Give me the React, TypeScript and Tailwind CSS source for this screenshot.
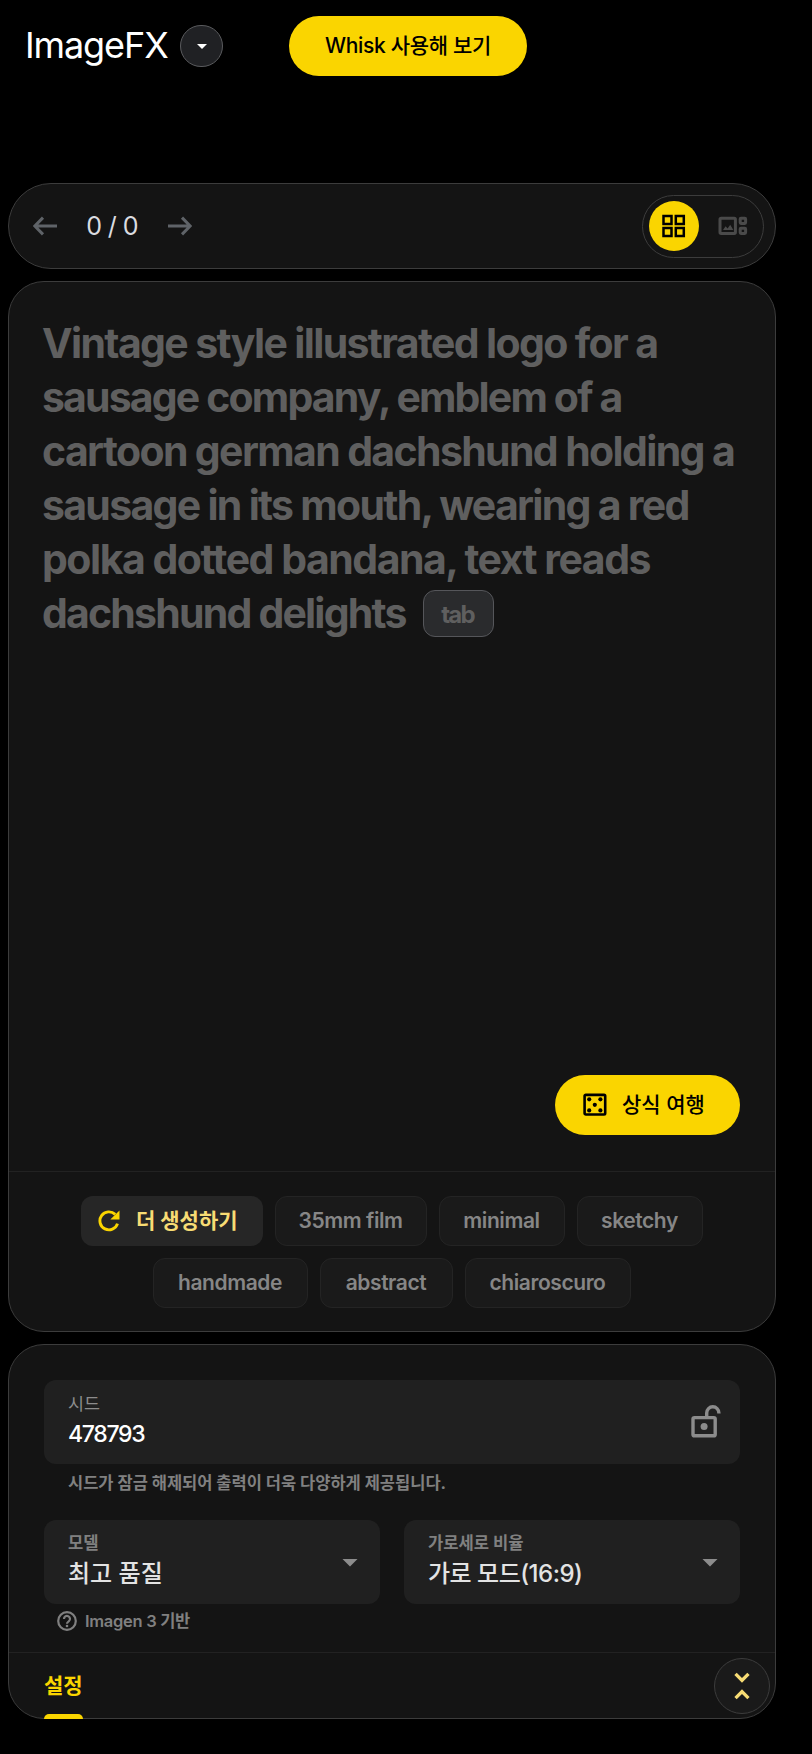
import { MdArrowDropDown, MdUnfoldLess } from "react-icons/md";

const promptLines = [
  { text: "Vintage style illustrated logo for a", className: "tracking-[-1.64px]" },
  { text: "sausage company, emblem of a", className: "tracking-[-1.85px]" },
  { text: "cartoon german dachshund holding a", className: "tracking-[-1.64px]" },
  { text: "sausage in its mouth, wearing a red", className: "tracking-[-1.71px]" },
  { text: "polka dotted bandana, text reads", className: "tracking-[-1.49px]" },
];

const chips = [
  { label: "35mm film", className: "w-[152px]" },
  { label: "minimal", className: "w-[126px]" },
  { label: "sketchy", className: "w-[126px]" },
  { label: "handmade", className: "w-[155px]" },
  { label: "abstract", className: "w-[133px]" },
  { label: "chiaroscuro", className: "w-[166px]" },
];

const ArrowIcon = ({ className = "" }: { className?: string }) => (
  <svg className={className} width="24" height="20" viewBox="0 0 24 20" fill="none" stroke="#5f6368" strokeWidth="3">
    <path d="M24 10H2.4M10 1.6L1.8 10l8.2 8.4" />
  </svg>
);

const GridIcon = () => (
  <svg width="24" height="24" viewBox="0 0 24 24" fill="none" stroke="#000" strokeWidth="2.5">
    <path d="M1.5 2h8v8h-8zM13.8 2h8v8h-8zM1.5 14h8v8h-8zM13.8 14h8v8h-8z" />
  </svg>
);

const GalleryIcon = () => (
  <svg width="30" height="20" viewBox="0 0 30 20" fill="none" stroke="#4a4a4a" strokeWidth="3">
    <rect x="2" y="2.2" width="15.4" height="15.2" rx="1.2" />
    <rect x="22.2" y="2.2" width="5.4" height="5.2" rx="0.8" />
    <rect x="22.2" y="12.2" width="5.4" height="5.2" rx="0.8" />
    <path d="M5 14l2.6-3.8 2 2.4 2.6-3.8 3.2 5.2z" fill="#4a4a4a" stroke="none" />
  </svg>
);

const DiceIcon = () => (
  <svg width="24" height="24" viewBox="0 0 24 24">
    <rect x="1.6" y="1.9" width="20.6" height="19.6" rx="1.2" fill="none" stroke="#000" strokeWidth="2.6" />
    <circle cx="6.2" cy="6.3" r="2.1" />
    <circle cx="17.4" cy="6.3" r="2.1" />
    <circle cx="11.8" cy="11.8" r="2.1" />
    <circle cx="6.2" cy="17.4" r="2.1" />
    <circle cx="17.4" cy="17.4" r="2.1" />
  </svg>
);

const RefreshIcon = () => (
  <svg width="22" height="22" viewBox="0 0 22 22">
    <path d="M17.2 4.4A9 9 0 1 0 19.5 13.6" fill="none" stroke="#fad500" strokeWidth="2.9" />
    <path d="M21.5 0.4V9.6H12.3z" fill="#fad500" />
  </svg>
);

const HelpIcon = () => (
  <svg width="24" height="24" viewBox="0 0 24 24" fill="none" stroke="#808080" strokeWidth="2.2">
    <circle cx="12" cy="12" r="8.8" />
    <path d="M9 10a3 3 0 1 1 4.9 2.2c-1 .8-1.9 1.3-1.9 2.6" />
    <circle cx="12" cy="17" r="1.3" fill="#808080" stroke="none" />
  </svg>
);

const UnlockIcon = () => (
  <svg width="30" height="33" viewBox="0 0 30 33" fill="none" stroke="#8c8c8c" strokeWidth="3.4">
    <rect x="2" y="12.6" width="22.2" height="18.2" rx="1.4" />
    <path d="M15.7 12V7.9a6.1 6.1 0 0 1 12.2 0v.6" />
    <circle cx="13.1" cy="21.6" r="3.5" fill="#8c8c8c" stroke="none" />
  </svg>
);

const SelectField = ({ label, value, valueClass = "" }: { label: string; value: string; valueClass?: string }) => (
  <div className="flex h-[84px] w-[336px] items-center justify-between rounded-xl bg-[#202020] pl-6 pr-3">
    <div className="flex h-full flex-col pt-[11px]">
      <span className="text-[16.6px] font-bold leading-6 text-[#808080]">{label}</span>
      <span className={`mt-1 text-[24px] font-medium leading-[30px] text-[#e3e3e3] ${valueClass}`}>{value}</span>
    </div>
    <MdArrowDropDown className="size-9 text-[#8c8c8c]" />
  </div>
);

const Header = () => (
  <header className="flex h-[92px] items-start pl-[25px]">
    <h1 className="w-[155px] pt-[22px] text-[36px] leading-[46px] tracking-[-1.1px] text-white">ImageFX</h1>
    <button className="mt-[25px] flex h-[42px] w-[43px] items-center justify-center rounded-full border border-[#5a5b5e] bg-[#202124] text-white">
      <MdArrowDropDown className="size-6" />
    </button>
    <button className="ml-[66px] mt-4 flex h-[60px] w-[238px] items-center justify-center rounded-full bg-[#fad500] text-[21px] font-medium tracking-[-0.3px] text-black">
      Whisk 사용해 보기
    </button>
  </header>
);

export default function App() {
  return (
    <div className="h-[1754px] w-full overflow-hidden bg-black font-['Inter','Noto_Sans_CJK_KR',sans-serif]">
      <Header />

      <main className="mt-[91px] flex w-[776px] flex-col gap-3 pl-2">
        {/* History bar */}
        <div className="flex h-[86px] items-center rounded-full border border-[#3c3c3c] bg-[#141414] pl-6 pr-[11px]">
          <ArrowIcon />
          <span className="ml-7 mr-[29px] w-[54px] whitespace-nowrap pt-px text-center text-[25px] tracking-[-0.6px] text-[#dadce0]">
            0 / 0
          </span>
          <ArrowIcon className="rotate-180" />
          <div className="ml-auto flex h-[63px] w-[122px] items-center gap-[19px] rounded-full border border-[#3c3c3c] pl-1.5">
            <button className="flex size-[50px] items-center justify-center rounded-full bg-[#fad500]">
              <GridIcon />
            </button>
            <GalleryIcon />
          </div>
        </div>

        {/* Prompt */}
        <section className="flex h-[1051px] flex-col rounded-[36px] border border-[#3c3c3c] bg-[#141414]">
          <div className="flex flex-1 flex-col pl-[33px] pr-[35px] pt-[34px]">
            <div className="text-[41px] font-bold leading-[54px] text-[#5f5f5f]">
              {promptLines.map((line) => (
                <p key={line.text} className={`whitespace-nowrap ${line.className}`}>
                  {line.text}
                </p>
              ))}
              <div className="flex items-center">
                <span className="w-[381px] whitespace-nowrap tracking-[-1.8px]">dachshund delights</span>
                <kbd className="flex h-[47px] w-[71px] items-center justify-center rounded-xl border border-[#55565a] bg-[#2a2b2d] pr-0.5 pt-1 font-['Inter',sans-serif] text-[24px] leading-7 tracking-[-1.8px] text-[#5f5f5f]">
                  tab
                </kbd>
              </div>
            </div>
            <button className="mb-9 ml-auto mt-auto flex h-[60px] w-[185px] items-center gap-[15px] rounded-full bg-[#fad500] pl-7 text-[21px] font-medium text-black">
              <DiceIcon />
              상식 여행
            </button>
          </div>
          <div className="flex h-[160px] flex-wrap content-start justify-center gap-3 border-t border-[#222] px-[60px] pt-6">
            <button className="flex h-[50px] w-[182px] items-center gap-4 rounded-xl bg-[#262626] pl-[17px] text-[21px] font-bold text-[#f7dc74]">
              <RefreshIcon />
              더 생성하기
            </button>
            {chips.map((chip) => (
              <button
                key={chip.label}
                className={`flex h-[50px] items-center justify-center whitespace-nowrap rounded-xl border border-[#242424] bg-[#1a1a1a] pr-px text-[21px] font-semibold tracking-[-0.42px] text-[#868686] ${chip.className}`}
              >
                {chip.label}
              </button>
            ))}
          </div>
        </section>

        {/* Settings */}
        <section className="flex h-[375px] flex-col rounded-[36px] border border-[#3c3c3c] bg-[#141414]">
          <div className="h-[307px] px-[35px] pt-[35px]">
            <div className="flex h-[84px] items-center justify-between rounded-xl bg-[#202020] pl-6 pr-[19px]">
              <div className="flex h-full flex-col pt-3">
                <span className="text-[17.4px] leading-6 text-[#8c8c8c]">시드</span>
                <span className="mt-[3px] text-[23px] font-medium leading-[30px] tracking-[-1.3px] text-white">478793</span>
              </div>
              <div className="pb-0.5">
                <UnlockIcon />
              </div>
            </div>
            <p className="ml-6 mt-[7px] text-[16.5px] font-bold leading-6 text-[#808080]">
              시드가 잠금 해제되어 출력이 더욱 다양하게 제공됩니다.
            </p>
            <div className="mt-[25px] flex gap-6">
              <SelectField label="모델" value="최고 품질" />
              <SelectField label="가로세로 비율" value="가로 모드(16:9)" valueClass="tracking-[-0.5px]" />
            </div>
            <div className="ml-[11px] mt-[5px] flex items-center gap-[6px] text-[16.5px] font-semibold leading-6 text-[#808080]">
              <HelpIcon />
              <span className="whitespace-nowrap tracking-[-0.3px]">Imagen 3 기반</span>
            </div>
          </div>
          <div className="flex flex-1 justify-between border-t border-[#222] pl-[35px] pr-[5px]">
            <div className="-mb-px flex w-[39px] flex-col justify-between pt-[18px]">
              <span className="whitespace-nowrap text-[21px] font-bold leading-[30px] text-[#fad500]">설정</span>
              <span className="h-[5px] rounded-t-md bg-[#fad500]" />
            </div>
            <button className="mt-[5px] flex size-14 items-center justify-center rounded-full border border-[#3c3c3c] bg-[#1a1a1a] text-[#f7dc74]">
              <MdUnfoldLess className="size-10" />
            </button>
          </div>
        </section>
      </main>
    </div>
  );
}
